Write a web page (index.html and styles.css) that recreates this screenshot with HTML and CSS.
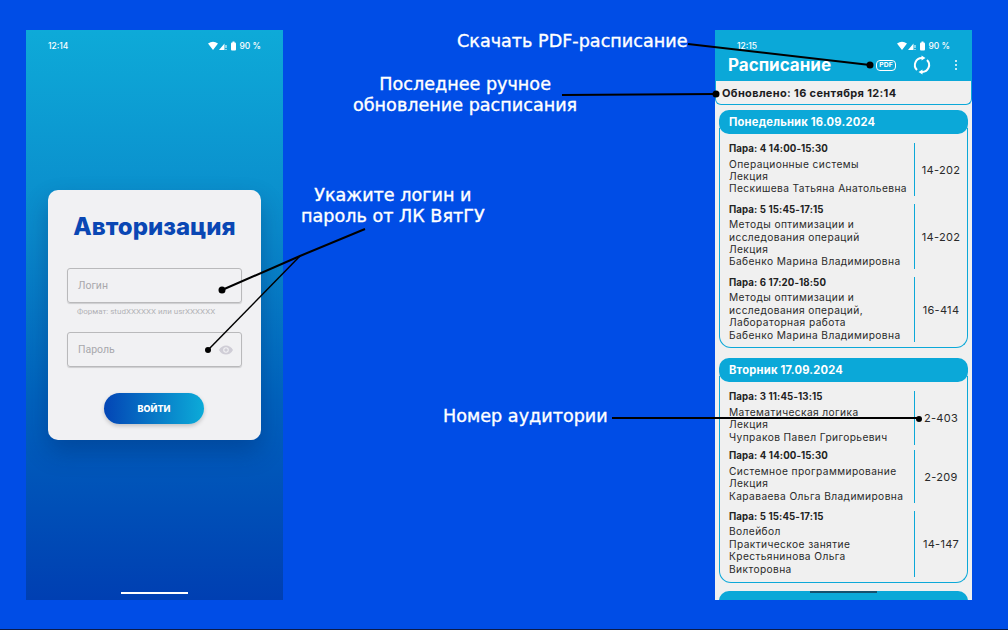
FILE: index.html
```html
<!DOCTYPE html>
<html lang="en">
<head>
  <meta charset="UTF-8" />
  <title>Расписание ВятГУ</title>
  <link rel="stylesheet" href="styles.css">
</head>
<body>

  <div class="slide">

    <!-- login screen -->
    <div class="phone login">
      <div class="status">
        <span>12:14</span>
        <span class="status-right">
          <svg width="28" height="10" viewBox="0 0 28 10"><path d="M0 2.5 Q5 -1 10 2.5 L5 9Z M11 9 L16.5 2.5 V9Z M17.5 4h1v3h-1z M17.5 8h1v1h-1z" fill="#fff"/><rect x="23" y="1.5" width="5" height="8" rx="1" fill="#fff"/><rect x="24.5" y="0.5" width="2" height="1.5" fill="#fff"/></svg>
          <span>90 %</span>
        </span>
      </div>
      <div class="login-card">
        <h1>Авторизация</h1>
        <div class="field">Логин</div>
        <div class="hint">Формат: studXXXXXX или usrXXXXXX</div>
        <div class="field field-pass">
          Пароль
          <svg width="14" height="10" viewBox="0 0 14 10"><path d="M0 5 C3 -1 11 -1 14 5 C11 11 3 11 0 5Z" fill="#cfcdd6"/><circle cx="7" cy="5" r="2.8" fill="#f1f1f3"/><circle cx="7" cy="5" r="1.7" fill="#cfcdd6"/></svg>
        </div>
        <div class="btn">ВОЙТИ</div>
      </div>
      <div class="home-bar"></div>
    </div>

    <!-- schedule screen -->
    <div class="phone sched">
      <div class="sched-top">
        <div class="status">
          <span>12:15</span>
          <span class="status-right">
            <svg width="28" height="10" viewBox="0 0 28 10"><path d="M0 2.5 Q5 -1 10 2.5 L5 9Z M11 9 L16.5 2.5 V9Z M17.5 4h1v3h-1z M17.5 8h1v1h-1z" fill="#fff"/><rect x="23" y="1.5" width="5" height="8" rx="1" fill="#fff"/><rect x="24.5" y="0.5" width="2" height="1.5" fill="#fff"/></svg>
            <span>90 %</span>
          </span>
        </div>
        <div class="appbar">
          <span class="app-title">Расписание</span>
          <span class="pdf">PDF</span>
          <svg class="refresh" width="18" height="18" viewBox="0 0 18 18" fill="none" stroke="#fff" stroke-width="2"><path d="M4 14 A7 7 0 0 1 9 2"/><path d="M14 4 A7 7 0 0 1 9 16"/><path d="M8.5 -0.5 L12.5 2 L8.5 4.5Z M9.5 13.5 L5.5 16 L9.5 18.5Z" fill="#fff" stroke="none"/></svg>
          <span class="kebab"><i></i><i></i><i></i></span>
        </div>
      </div>
      <div class="updated">Обновлено: 16 сентября 12:14</div>

      <div class="day">
        <div class="day-head">Понедельник 16.09.2024</div>
        <div class="day-body">
          <div class="lesson">
            <div class="info">
              <b>Пара: 4 14:00-15:30</b>
              <p>Операционные системы<br>Лекция<br>Пескишева Татьяна Анатольевна</p>
            </div>
            <div class="room">14-202</div>
          </div>
          <div class="lesson">
            <div class="info">
              <b>Пара: 5 15:45-17:15</b>
              <p>Методы оптимизации и<br>исследования операций<br>Лекция<br>Бабенко Марина Владимировна</p>
            </div>
            <div class="room">14-202</div>
          </div>
          <div class="lesson">
            <div class="info">
              <b>Пара: 6 17:20-18:50</b>
              <p>Методы оптимизации и<br>исследования операций,<br>Лабораторная работа<br>Бабенко Марина Владимировна</p>
            </div>
            <div class="room">16-414</div>
          </div>
        </div>
      </div>

      <div class="day">
        <div class="day-head">Вторник 17.09.2024</div>
        <div class="day-body">
          <div class="lesson lesson-tight">
            <div class="info">
              <b>Пара: 3 11:45-13:15</b>
              <p>Математическая логика<br>Лекция<br>Чупраков Павел Григорьевич</p>
            </div>
            <div class="room">2-403</div>
          </div>
          <div class="lesson">
            <div class="info">
              <b>Пара: 4 14:00-15:30</b>
              <p>Системное программирование<br>Лекция<br>Караваева Ольга Владимировна</p>
            </div>
            <div class="room">2-209</div>
          </div>
          <div class="lesson">
            <div class="info">
              <b>Пара: 5 15:45-17:15</b>
              <p>Волейбол<br>Практическое занятие<br>Крестьянинова Ольга<br>Викторовна</p>
            </div>
            <div class="room">14-147</div>
          </div>
        </div>
      </div>

      <div class="day-head day-next"></div>
      <div class="sched-bar"></div>
    </div>

    <!-- callouts over the screens -->
    <svg class="arrows" width="1008" height="630" viewBox="0 0 1008 630" fill="none" stroke="#000" stroke-width="2">
      <path d="M688 44 L870 65"/>
      <path d="M562 95 L716 94"/>
      <path d="M365 229 L300 256 L222 290"/>
      <path d="M300 256 L208 350" stroke-width="1.5"/>
      <path d="M612 418 L919 418"/>
      <g fill="#000" stroke="none">
        <circle cx="870" cy="65" r="3.5"/>
        <circle cx="716" cy="94" r="3.5"/>
        <circle cx="222" cy="290" r="3.5"/>
        <circle cx="208" cy="350" r="3"/>
        <circle cx="919" cy="419" r="3"/>
      </g>
    </svg>
    <div class="note note-pdf">Скачать PDF-расписание</div>
    <div class="note note-upd">Последнее ручное<br>обновление расписания</div>
    <div class="note note-login">Укажите логин и<br>пароль от ЛК ВятГУ</div>
    <div class="note note-room">Номер аудитории</div>

  </div>

</body>
</html>
```

FILE: styles.css
```css
* {
  box-sizing: border-box;
}

body {
  margin: 0;
  background: #004de6;
  font-family: Inter, 'Noto Sans', sans-serif;
}

.slide {
  position: relative;
  width: 1008px;
  height: 630px;
  padding: 30px 36px 30px 26px;
  display: flex;
  justify-content: space-between;
  align-items: flex-start;
  border-bottom: 1px solid #0b1a4a;
  overflow: hidden;
}

.phone {
  position: relative;
  width: 257px;
  height: 570px;
  overflow: hidden;
}

.status {
  height: 16px;
  padding: 0 22px;
  display: flex;
  justify-content: space-between;
  align-items: center;
  color: #fff;
  font-size: 8.5px;
  font-weight: 500;
}

.status-right {
  display: flex;
  align-items: center;
  gap: 3px;
}

/* login */

.login {
  padding-top: 8px;
  background: linear-gradient(180deg, #0eaad8 0%, #0a8acb 35%, #0062bd 65%, #003fb2 100%);
}

.login-card {
  width: 213px;
  height: 250px;
  margin: 136px 0 0 22px;
  padding: 23px 19px 0;
  background: #f1f1f3;
  border-radius: 10px;
  box-shadow: 0 12px 24px rgba(0, 30, 90, 0.3);
}

.login-card h1 {
  margin: 0 0 27px;
  text-align: center;
  color: #0a47b4;
  font-size: 24px;
  line-height: 28px;
  font-weight: 800;
  white-space: nowrap;
}

.field {
  height: 35px;
  padding: 0 10px;
  display: flex;
  align-items: center;
  justify-content: space-between;
  border: 1px solid #b9b9bb;
  border-radius: 3px;
  box-shadow: 0 1px 1px rgba(0, 0, 0, 0.15);
  color: #a8a8ac;
  font-size: 10.5px;
  font-family: Roboto, sans-serif;
}

.hint {
  height: 29px;
  padding: 4px 0 0 10px;
  color: #b2b2b6;
  font-size: 8px;
  line-height: 10px;
  font-family: Roboto, sans-serif;
  white-space: nowrap;
}

.field-pass svg {
  margin-right: -2px;
}

.btn {
  width: 100px;
  height: 31px;
  margin: 26px 0 0 37px;
  display: flex;
  align-items: center;
  justify-content: center;
  border-radius: 16px;
  background: linear-gradient(90deg, #0345b5, #0cabd8);
  box-shadow: 0 2px 4px rgba(0, 0, 0, 0.2);
  color: #fff;
  font-size: 9px;
  font-weight: 800;
}

.home-bar {
  position: absolute;
  left: 95px;
  bottom: 6px;
  width: 67px;
  height: 2px;
  background: #fff;
}

/* schedule */

.sched {
  background: #f0f0f0;
}

.sched-top {
  height: 51px;
  padding-top: 8px;
  background: #0ba8d8;
}

.appbar {
  height: 22px;
  padding: 0 15px 0 13px;
  display: flex;
  align-items: center;
  color: #fff;
}

.app-title {
  flex: 1;
  font-size: 17px;
  font-weight: 700;
}

.pdf {
  width: 20px;
  height: 11px;
  margin-right: 17px;
  border: 1.2px solid #fff;
  border-radius: 4px;
  font-size: 6.8px;
  font-weight: 700;
  line-height: 8.6px;
  text-align: center;
}

.refresh {
  margin-right: 24px;
  overflow: visible;
}

.kebab {
  display: flex;
  flex-direction: column;
  gap: 2px;
}

.kebab i {
  width: 2px;
  height: 2px;
  background: #fff;
  border-radius: 50%;
}

.updated {
  height: 24px;
  padding-left: 6px;
  border: 1px solid #0ba8d8;
  border-top: 0;
  border-radius: 0 0 6px 6px;
  color: #1d1d1f;
  font-size: 11px;
  font-weight: 700;
  line-height: 25px;
  letter-spacing: 0.35px;
  white-space: nowrap;
}

.day {
  margin: 5px 4px 10px;
}

.day-head {
  height: 24px;
  padding-left: 10px;
  background: #0ba8d8;
  border-radius: 10px;
  color: #fff;
  font-size: 11.2px;
  font-weight: 700;
  line-height: 25px;
  letter-spacing: 0.2px;
}

.day-body {
  margin-top: -6px;
  padding: 15px 0 5px 9px;
  border: 1px solid #0ba8d8;
  border-top: 0;
  border-radius: 0 0 12px 12px;
}

.lesson {
  display: flex;
  margin-bottom: 7.5px;
}

.lesson-tight {
  margin-bottom: 5.5px;
}

.lesson:last-child {
  margin-bottom: 0;
}

.info {
  width: 185px;
  color: #2a2a2a;
  font-size: 10.2px;
  line-height: 12.4px;
  letter-spacing: 0.4px;
  white-space: nowrap;
}

.info b {
  display: block;
  height: 14.5px;
  color: #222;
  font-weight: 700;
  font-size: 9.7px;
  letter-spacing: 0.1px;
}

.info p {
  margin: 0;
  padding-bottom: 1.5px;
}

.room {
  flex: 1;
  display: flex;
  align-items: center;
  justify-content: center;
  border-left: 1px solid #0ba8d8;
  color: #2a2a2a;
  font-size: 11px;
  letter-spacing: 0.3px;
}

.day-next {
  margin: -2px 4px 0;
}

.sched-bar {
  position: absolute;
  left: 95px;
  bottom: 7px;
  width: 67px;
  height: 2px;
  background: #14506e;
}

/* callouts */

.arrows {
  position: absolute;
  left: 0;
  top: 0;
}

.note {
  position: absolute;
  color: #fff;
  font-family: 'DejaVu Sans', sans-serif;
  font-size: 17.6px;
  line-height: 21px;
  text-align: center;
  white-space: nowrap;
  -webkit-text-stroke: 0.35px #fff;
}

.note-pdf {
  left: 457px;
  top: 31px;
}

.note-upd {
  left: 353px;
  top: 74px;
}

.note-login {
  left: 301px;
  top: 185px;
}

.note-room {
  left: 443px;
  top: 406px;
}
```
